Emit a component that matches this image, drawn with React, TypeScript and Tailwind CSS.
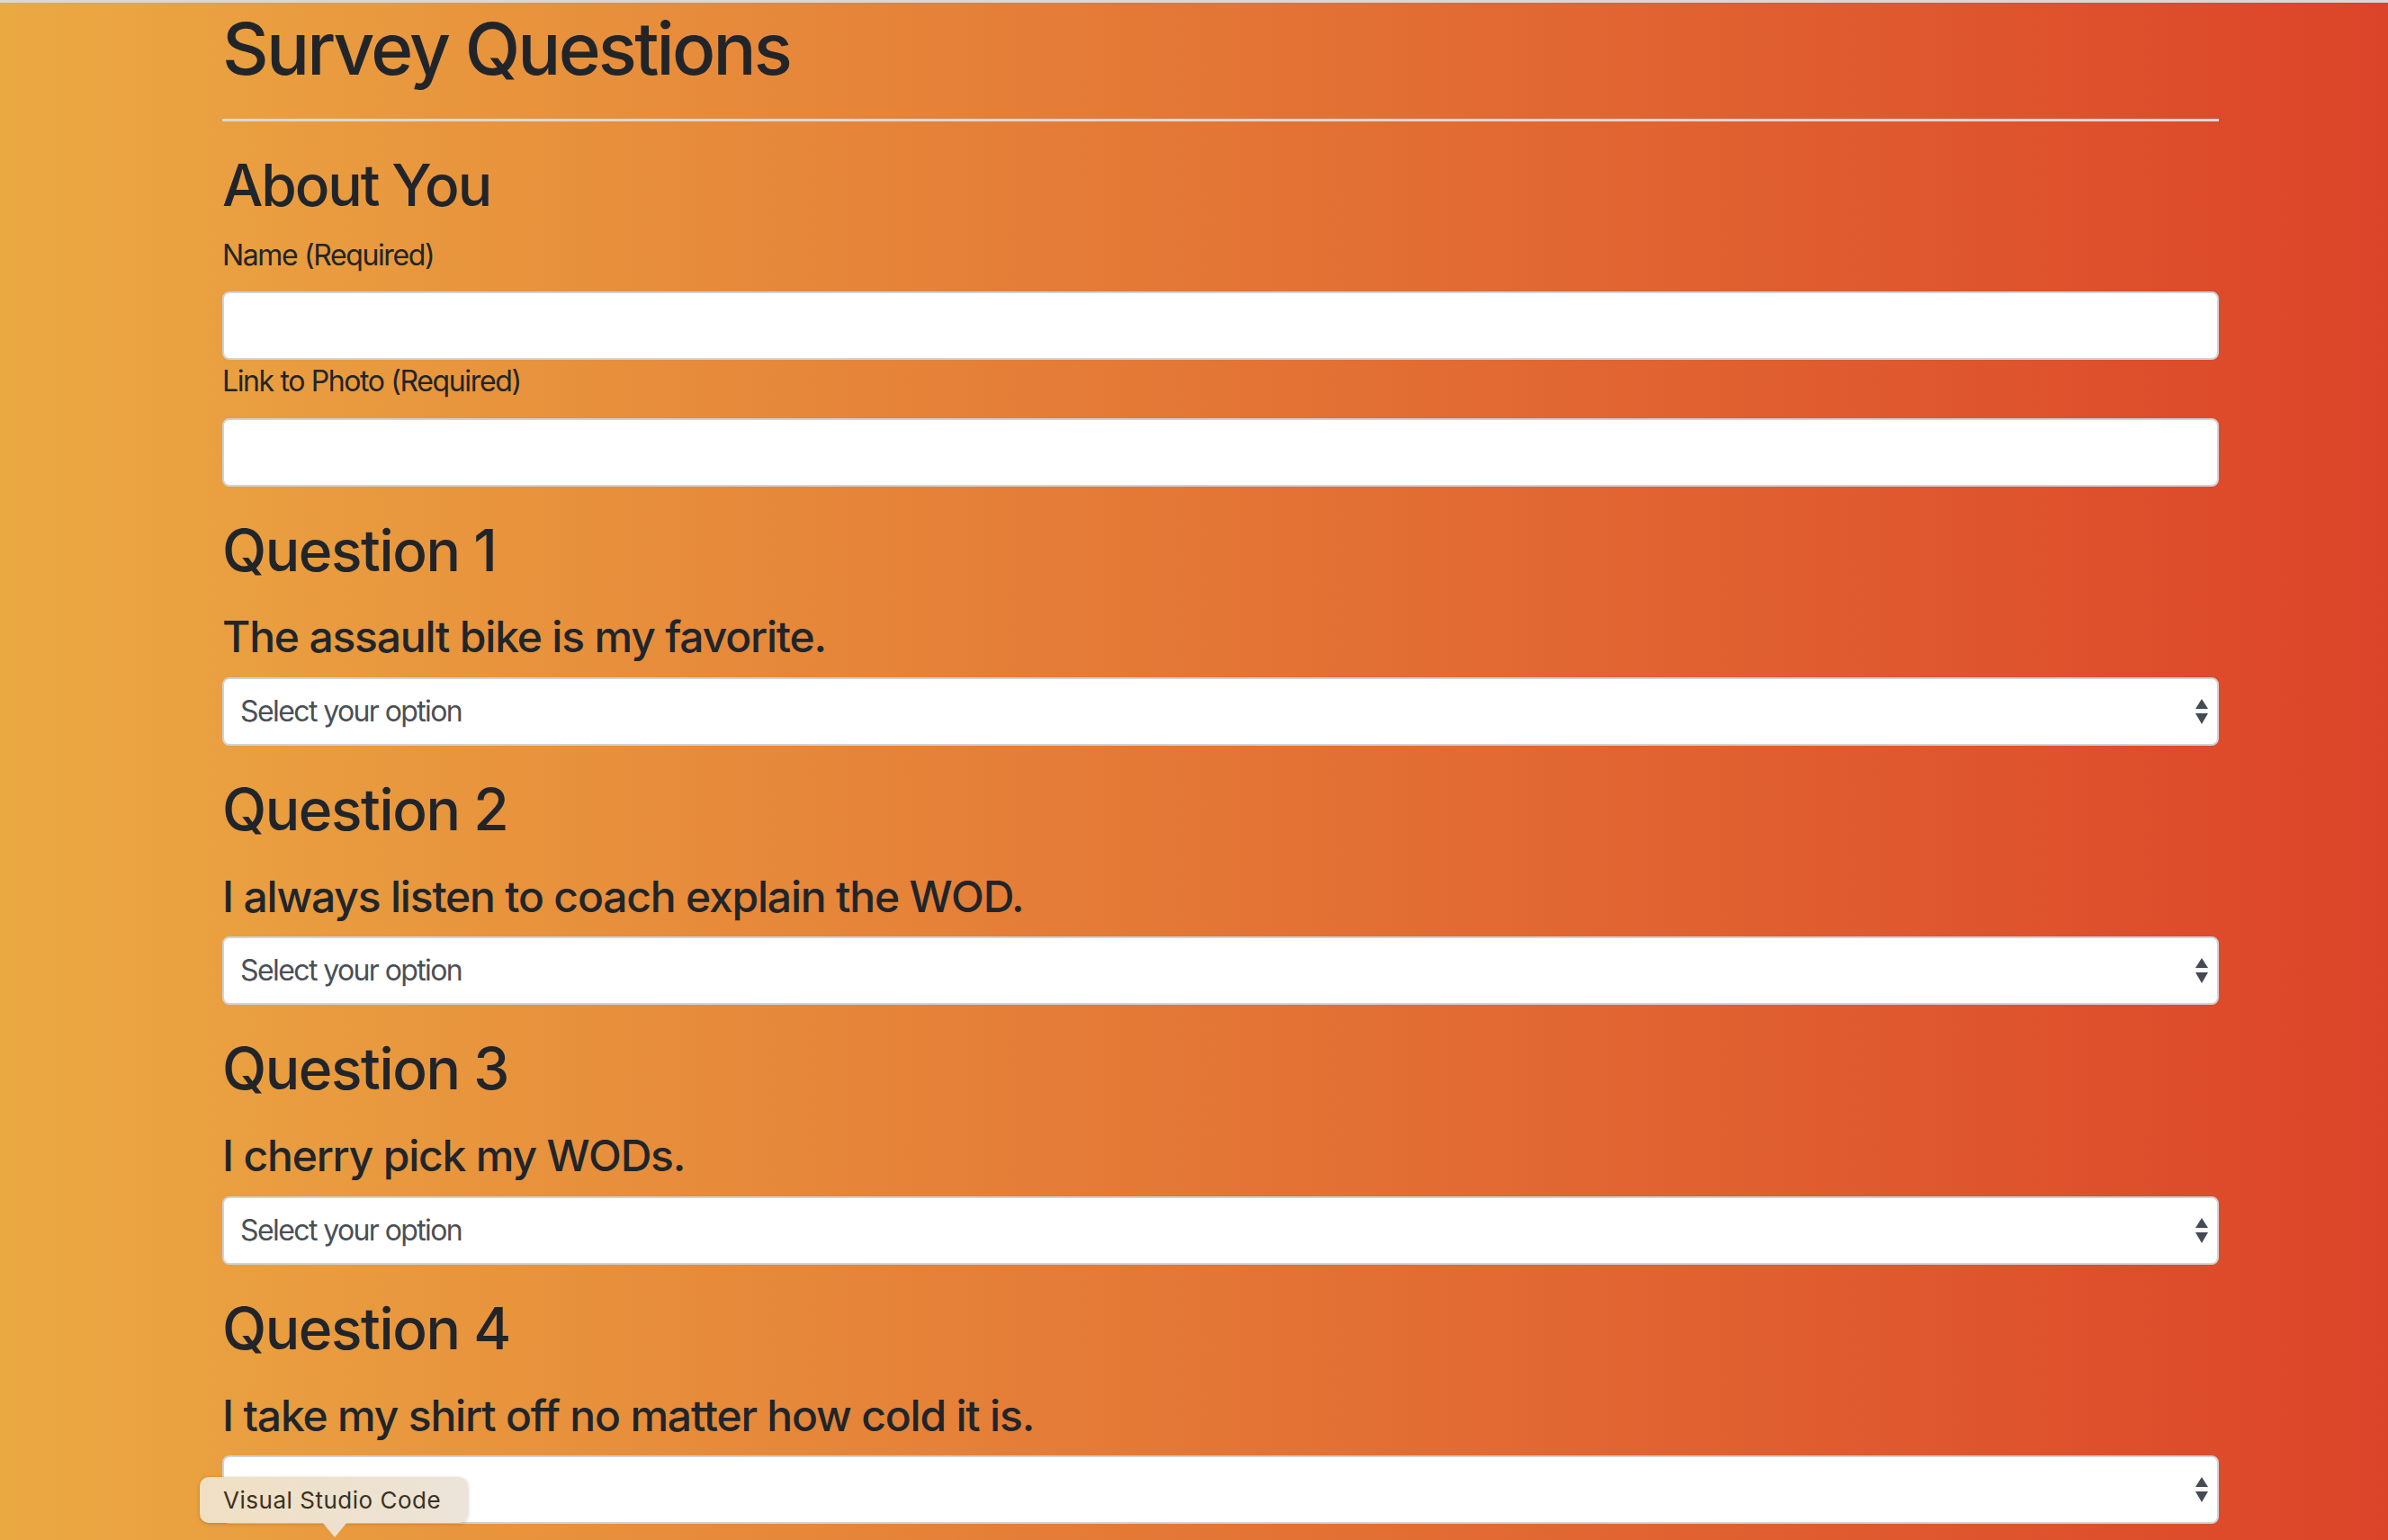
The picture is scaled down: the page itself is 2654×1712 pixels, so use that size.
const questions = [
  { title: "Question 1", text: "The assault bike is my favorite." },
  { title: "Question 2", text: "I always listen to coach explain the WOD." },
  { title: "Question 3", text: "I cherry pick my WODs." },
  { title: "Question 4", text: "I take my shirt off no matter how cold it is." },
];

function SelectBox() {
  return (
    <div className="relative mt-[16px] flex h-[76px] items-center rounded-[8px] border-2 border-[#ced4da] bg-white pl-[18px] text-[32px] leading-[1.2] tracking-[-0.05em] text-[#495057]">
      <span>Select your option</span>
      <svg
        className="absolute right-[10px] top-1/2 -translate-y-1/2"
        width="14"
        height="28"
        viewBox="0 0 14 28"
      >
        <polygon points="7,0 14,11 0,11" fill="#454b54" />
        <polygon points="0,16 14,16 7,28" fill="#454b54" />
      </svg>
    </div>
  );
}

export default function App() {
  return (
    <div
      className="relative min-h-screen overflow-hidden bg-[linear-gradient(to_right,#eba942,#dc4429)] text-[#212529]"
      style={{ fontFamily: "Inter, 'Liberation Sans', sans-serif" }}
    >
      <div className="h-[3px] bg-[#d8d8d8]" />

      <div className="ml-[247px] w-[2219px] pb-[20px]">
        <h1 className="mt-[3px] text-[80px] font-medium leading-[1.2] tracking-[-0.035em]">
          Survey Questions
        </h1>
        <div className="mt-[30px] h-[3px] bg-[#d9d9d9]" />

        {/* About you */}
        <h2 className="mt-[33px] text-[64px] font-medium leading-[1.2] tracking-[-0.033em]">
          About You
        </h2>
        <label className="mt-[20px] block text-[32px] leading-[1.2] tracking-[-0.043em]">
          Name (Required)
        </label>
        <div className="mt-[21px] h-[76px] rounded-[8px] border-2 border-[#ced4da] bg-white" />
        <label className="mt-[5px] block text-[32px] leading-[1.2] tracking-[-0.043em]">
          Link to Photo (Required)
        </label>
        <div className="mt-[21px] h-[76px] rounded-[8px] border-2 border-[#ced4da] bg-white" />

        {/* Questions */}
        {questions.map((q) => (
          <div key={q.title}>
            <h2 className="mt-[33px] text-[64px] font-medium leading-[1.2] tracking-[-0.022em]">
              {q.title}
            </h2>
            <h4 className="mt-[29px] text-[48px] font-medium leading-[1.2] tracking-[-0.025em]">
              {q.text}
            </h4>
            <SelectBox />
          </div>
        ))}
      </div>

      {/* Dock tooltip */}
      <div className="absolute left-[222px] top-[1642px] flex h-[51px] w-[298px] items-center rounded-[10px] bg-[linear-gradient(to_right,#f0dfc2,#ece4d9)] pl-[26px] text-[26px] tracking-[0.02em] text-[#3b3124] shadow-[0_1px_4px_rgba(0,0,0,0.2)]">
        Visual Studio Code
        <div className="absolute left-[136px] top-[50px] h-0 w-0 border-x-[14px] border-t-[17px] border-x-transparent border-t-[#ede1cc]" />
      </div>
    </div>
  );
}
